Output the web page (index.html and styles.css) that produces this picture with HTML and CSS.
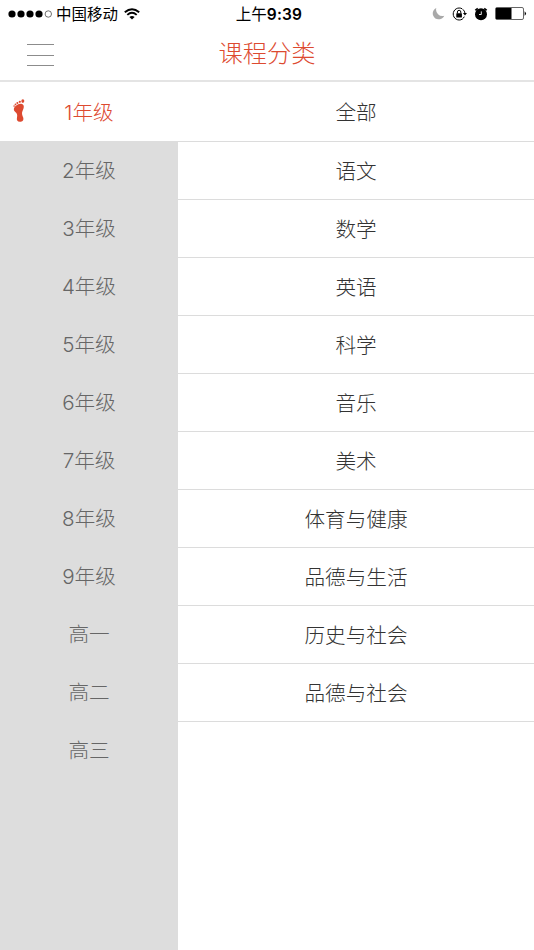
FILE: index.html
```html
<!DOCTYPE html>
<html lang="zh-CN">
<head>
  <meta charset="UTF-8" />
  <meta name="viewport" content="width=device-width, initial-scale=1.0"/>
  <title>课程分类</title>
  <link rel="stylesheet" href="styles.css">
</head>
<body>
  <!-- Status bar -->
  <div class="status">
    <div class="status-left">
      <svg class="signal" width="44" height="10" viewBox="0 0 44 10">
        <circle cx="4" cy="5" r="3.6"/>
        <circle cx="13" cy="5" r="3.6"/>
        <circle cx="22" cy="5" r="3.6"/>
        <circle cx="31" cy="5" r="3.6"/>
        <circle cx="40.3" cy="5" r="3.2" fill="none" stroke="#333" stroke-width="0.7"/>
      </svg>
      <span class="carrier">中国移动</span>
      <svg class="wifi" width="16" height="12" viewBox="0 0 16 12" fill="none" stroke="#000" stroke-width="1.9">
        <path d="M0.8 4.3 Q8 -2 15.2 4.3"/>
        <path d="M3.3 6.9 Q8 2.8 12.7 6.9"/>
        <path d="M8 11.6 L5.4 9 Q8 6.9 10.6 9 Z" fill="#000" stroke="none"/>
      </svg>
    </div>
    <div class="time">上午<b>9:39</b></div>
    <div class="status-right">
      <svg width="13" height="13" viewBox="0 0 13 13">
        <path d="M4.3 0.9 A6 6 0 1 0 12.3 8.7 A6.4 6.4 0 0 1 4.3 0.9 Z" fill="#a9a9a9"/>
      </svg>
      <svg class="lock" width="15" height="14" viewBox="0 0 15 14">
        <path d="M10.2 1.8 A6 6 0 1 0 10.2 12.2 M10.8 2.3 A6 6 0 0 1 13 6.4" fill="none" stroke="#000" stroke-width="1"/>
        <path d="M10.9 6 H15 L13 8.6 Z"/>
        <path d="M12.3 9.6 A6 6 0 0 1 10.2 12.2" fill="none" stroke="#000" stroke-width="1"/>
        <rect x="4.3" y="6.2" width="5.6" height="4.2" rx="0.5"/>
        <path d="M5.4 6.4 V5 A1.7 1.7 0 0 1 8.8 5 V6.4" fill="none" stroke="#000" stroke-width="1"/>
      </svg>
      <svg class="alarm" width="14" height="14" viewBox="0 0 14 14">
        <circle cx="7" cy="7.3" r="6"/>
        <path d="M1.4 3.4 A8 8 0 0 1 3.8 1.5 M10.2 1.5 A8 8 0 0 1 12.6 3.4" fill="none" stroke="#000" stroke-width="1.8"/>
        <path d="M7.3 4.4 V7.5 H5" fill="none" stroke="#fff" stroke-width="0.9"/>
      </svg>
      <svg class="battery" width="32" height="13" viewBox="0 0 32 13">
        <rect x="0.5" y="0.5" width="28" height="12" rx="1.5" fill="#fff" stroke="#555" stroke-width="0.9"/>
        <rect x="1" y="1" width="15.5" height="11"/>
        <path d="M29.6 4.2 Q32.4 6.5 29.6 8.8 Z"/>
      </svg>
    </div>
  </div>

  <div class="header">
    <div class="menu-btn"><span></span><span></span><span></span></div>
    <h1>课程分类</h1>
  </div>

  <div class="content">
    <ul class="grades">
      <li class="active">
        <svg class="foot" width="14" height="24" viewBox="0 0 14 24">
          <path d="M1.2 8.8 C2.5 6.2 6.5 4.2 9 5 C11.8 6 10.8 9.5 9.5 12 C8.4 14.3 9.3 16.5 10.2 18.6 C11 21.8 9.3 22.8 7 22.8 C4.2 22.8 3.4 21.2 4 18.6 C4.6 15.8 4 14.3 2.3 12.9 C0.8 11.7 0.5 10.3 1.2 8.8 Z"/>
          <ellipse cx="9.8" cy="2.1" rx="1.5" ry="1.8"/>
          <circle cx="6.8" cy="2.8" r="1.1"/>
          <circle cx="4.4" cy="3.9" r="1"/>
          <circle cx="2.5" cy="5.4" r="0.9"/>
          <circle cx="1.1" cy="7.1" r="0.8"/>
        </svg>
        <span>1年级</span>
      </li>
      <li>2年级</li>
      <li>3年级</li>
      <li>4年级</li>
      <li>5年级</li>
      <li>6年级</li>
      <li>7年级</li>
      <li>8年级</li>
      <li>9年级</li>
      <li>高一</li>
      <li>高二</li>
      <li>高三</li>
    </ul>
    <ul class="subjects">
      <li>全部</li>
      <li>语文</li>
      <li>数学</li>
      <li>英语</li>
      <li>科学</li>
      <li>音乐</li>
      <li>美术</li>
      <li>体育与健康</li>
      <li>品德与生活</li>
      <li>历史与社会</li>
      <li>品德与社会</li>
    </ul>
  </div>
</body>
</html>
```
FILE: styles.css
```css
* { box-sizing: border-box; }
body {
  margin: 0;
  height: 950px;
  display: flex;
  flex-direction: column;
  overflow: hidden;
  background: #fff;
  font-family: Inter, "Noto Sans CJK SC", sans-serif;
  font-weight: 300;
}
ul { list-style: none; margin: 0; padding: 0; }
svg { display: block; flex: none; }

/* Status bar */
.status {
  display: flex;
  align-items: center;
  height: 27px;
  padding: 0 7px 0 8px;
  font-size: 15.5px;
  line-height: 27px;
  font-weight: 400;
  color: #000;
}
.status-left, .status-right {
  display: flex;
  align-items: center;
  flex: 1;
}
.status-right { justify-content: flex-end; }
.carrier { margin-left: 4px; padding-top: 1px; }
.wifi { margin-left: 6px; }
.time { padding: 1px 0 0 3px; }
.time b { font-weight: 600; letter-spacing: 0.2px; }
.lock { margin-left: 7px; }
.alarm { margin-left: 7px; }
.battery { margin-left: 7px; }

.header {
  display: flex;
  align-items: center;
  height: 55px;
  padding: 0 27px;
  border-bottom: 2px solid #e4e4e4;
}
.menu-btn {
  display: flex;
  flex-direction: column;
  justify-content: space-between;
  width: 27px;
  height: 22px;
  margin-top: 3px;
}
.menu-btn span { height: 1px; background: #8c8c8c; }
.header h1 {
  flex: 1;
  margin: 0 27px 1px 0;
  text-align: center;
  font-size: 24.3px;
  line-height: 36px;
  font-weight: 300;
  color: #dd4a30;
}

.content {
  display: flex;
  flex: 1;
}
.grades {
  width: 178px;
  background: #ddd;
  color: #666;
}
.grades li, .subjects li {
  display: flex;
  align-items: center;
  justify-content: center;
  height: 58px;
  padding-top: 2px;
  font-size: 20.6px;
  line-height: 30px;
}
.grades li.active {
  position: relative;
  height: 59px;
  background: #fff;
  color: #dd4a30;
}
.foot {
  position: absolute;
  left: 13px;
  top: 17px;
  fill: #dd4a30;
}
.subjects {
  flex: 1;
  color: #333;
}
.subjects li {
  padding-top: 3px;
  border-bottom: 1px solid #dcdcdc;
}
.subjects li:first-child { height: 60px; }
```
